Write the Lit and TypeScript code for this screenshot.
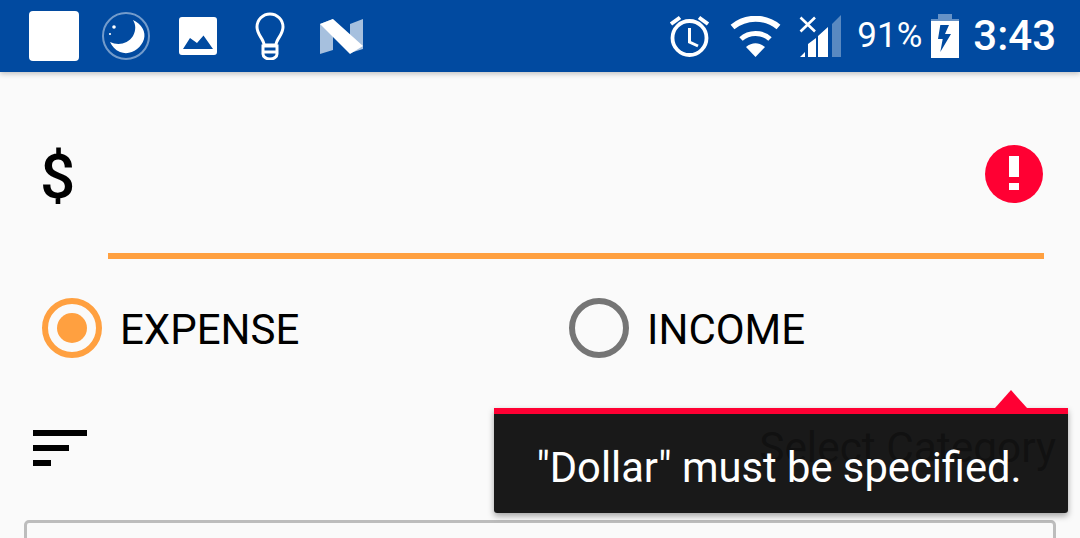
import { LitElement, html, css } from "lit";
import { customElement } from "lit/decorators.js";

@customElement("app-root")
export class AppRoot extends LitElement {
  static styles = css`
    :host { display: block; position: relative; width: 1080px; height: 538px; overflow: hidden; background: #fafafa; font-family: Roboto, sans-serif; color: #000; }
    svg { display: block; flex: none; }
    .status { height: 72px; background: #014aa0; display: flex; align-items: center; color: #fff; box-shadow: 0 2px 5px rgba(0,0,0,.22); position: relative; padding-left: 29px; box-sizing: border-box; }
    .left { display: flex; align-items: center; }
    .square { width: 50px; height: 50px; background: #fff; border-radius: 4px; margin-right: 23px; }
    .i-img { margin-left: 29px; }
    .i-bulb { margin-left: 38px; }
    .i-n { margin-left: 35px; }
    .right { margin-left: auto; display: flex; align-items: center; padding-right: 24px; }
    .i-wifi { margin-left: 19px; }
    .i-sig { margin-left: 18px; }
    .pct { font-size: 35px; margin-left: 16px; line-height: 72px; width: 64px; white-space: nowrap; }
    .i-bat { margin-left: 10px; }
    .time { font-size: 42px; font-weight: 500; margin-left: 14px; line-height: 72px; white-space: nowrap; }

    .amount { height: 187px; box-sizing: border-box; display: grid; grid-template-columns: 108px 1fr; padding-right: 36px; }
    .dollar { font-size: 62px; font-weight: 500; line-height: 70px; padding: 70px 0 0 40px; box-sizing: border-box; }
    .field { border-bottom: 6px solid #ffa040; display: flex; justify-content: flex-end; align-items: flex-start; padding: 73px 1px 0 0; box-sizing: border-box; }
    .radios { display: grid; grid-template-columns: 527px 1fr; padding: 39px 0 0 42px; }
    .radio { display: flex; align-items: center; gap: 18px; font-size: 42px; line-height: 56px; }
    .label { padding-top: 4px; }
    .dot { width: 60px; height: 60px; box-sizing: border-box; border-radius: 50%; border: 6px solid #757575; display: flex; align-items: center; justify-content: center; flex: none; }
    .dot.on { border-color: #ffa040; }
    .dot.on::after { content: ""; width: 30px; height: 30px; border-radius: 50%; background: #ffa040; }
    .cat { display: flex; align-items: center; justify-content: space-between; padding: 72px 24px 0 33px; height: 36px; }
    .bars { display: flex; flex-direction: column; gap: 9px; }
    .bars i { display: block; height: 6px; background: #000; }
    .b1 { width: 54px; } .b2 { width: 36px; } .b3 { width: 18px; }
    .select { font-size: 42.4px; line-height: 50px; color: #000; white-space: nowrap; }
    .box { margin: 54px 24px 0; height: 60px; border: 3px solid #bdbdbd; border-radius: 5px; box-sizing: border-box; background: #fafafa; }

    .tip { position: absolute; left: 494px; top: 408px; width: 574px; height: 105px; box-sizing: border-box; border-top: 6px solid #ff0033; background: rgba(18,18,18,.97); border-radius: 0 0 3px 3px; box-shadow: 0 3px 6px rgba(0,0,0,.35); color: #fff; font-size: 41.7px; display: flex; align-items: center; justify-content: center; white-space: nowrap; padding: 7px 4px 0 0; }
    .tip::before { content: ""; position: absolute; right: 41px; top: -24px; width: 32px; height: 18px; background: #ff0033; clip-path: polygon(50% 0, 100% 100%, 0 100%); }
  `;

  private moon() {
    return html`<svg width="48" height="48" viewBox="0 0 48 48">
      <circle cx="24" cy="24" r="23" fill="none" stroke="#fff" stroke-opacity=".45" stroke-width="2"/>
      <path d="M31 8C40 12 44 20 42 27C39 37 28 44 18 40C13 38 10 34 8 30C16 34 26 32 31 24C34 18 34 13 31 8Z" fill="#fff"/>
      <circle cx="12" cy="15" r="1.8" fill="#fff"/><circle cx="8" cy="22" r="1.1" fill="#fff"/>
    </svg>`;
  }
  private image() {
    return html`<svg class="i-img" width="38" height="38" viewBox="0 0 38 38">
      <path fill-rule="evenodd" fill="#fff" d="M3 0H35A3 3 0 0 1 38 3V35A3 3 0 0 1 35 38H3A3 3 0 0 1 0 35V3A3 3 0 0 1 3 0ZM4 32H34L24.500 18.500L18 26L11 21Z"/>
    </svg>`;
  }
  private bulb() {
    return html`<svg class="i-bulb" width="30" height="48" viewBox="0 0 30 48" fill="none" stroke="#fff" stroke-width="3">
      <path d="M9 33C9 27 2 23 2 15A13 13 0 0 1 28 15C28 23 21 27 21 33Z"/>
      <path d="M8 34H22V42A7 5 0 0 1 8 42Z"/><path d="M8 40H22"/>
    </svg>`;
  }
  private n() {
    return html`<svg class="i-n" width="43" height="35" viewBox="0 0 43 35">
      <path d="M0 5L13 0V31L0 35Z" fill="#fff" fill-opacity=".65"/>
      <path d="M30 5L43 0V30L30 34Z" fill="#fff" fill-opacity=".65"/>
      <path d="M0 5L13 0L43 27L30 35Z" fill="#fff"/>
    </svg>`;
  }
  private alarm() {
    return html`<svg width="42" height="42" viewBox="0 0 42 42" fill="none" stroke="#fff">
      <circle cx="20.500" cy="23" r="17" stroke-width="3.800"/>
      <path d="M20.500 13V27L29 31" stroke-width="3"/>
      <path d="M2 9L11 2.500M39 9L30 2.500" stroke-width="4"/>
    </svg>`;
  }
  private wifi() {
    return html`<svg class="i-wifi" width="51" height="41" viewBox="0 0 51 41">
      <path fill="#fff" d="M25.500 41L16 31C22 26 29 26 35 31Z"/>
      <path fill="none" stroke="#fff" stroke-width="5" d="M11 23C19 15.500 32 15.500 40 23"/>
      <path fill="none" stroke="#fff" stroke-width="6" d="M2.500 11C16 0 35 0 48.500 11"/>
    </svg>`;
  }
  private signal() {
    return html`<svg class="i-sig" width="42" height="42" viewBox="0 0 42 42">
      <path d="M1 42L6 37V42Z M9 42V29L17 23V42Z M19 42V21L29 12V42Z" fill="#fff"/>
      <path d="M33 42V9L42 0V42Z" fill="#fff" fill-opacity=".35"/>
      <path d="M1.500 2.500L16 16.500M16 2.500L1.500 16.500" stroke="#fff" stroke-width="2.600"/>
    </svg>`;
  }
  private battery() {
    return html`<svg class="i-bat" width="28" height="44" viewBox="0 0 28 44">
      <path d="M7 0H21V5H28V8H0V5H7Z" fill="#fff" fill-opacity=".4"/>
      <path fill-rule="evenodd" fill="#fff" d="M0 7H28V44H0ZM9.300 11L7 25H11.700L9.300 38L20 20H14L18 11Z"/>
    </svg>`;
  }

  render() {
    return html`
      <div class="status">
        <div class="left">
          <div class="square"></div>
          ${this.moon()}${this.image()}${this.bulb()}${this.n()}
        </div>
        <div class="right">
          ${this.alarm()}${this.wifi()}${this.signal()}
          <span class="pct">91%</span>
          ${this.battery()}
          <span class="time">3:43</span>
        </div>
      </div>
      <div class="amount">
        <div class="dollar">$</div>
        <div class="field">
          <svg width="58" height="58" viewBox="0 0 58 58">
            <circle cx="29" cy="29" r="29" fill="#ff0033"/>
            <path d="M24 11H34V32H24ZM24 38H34V45H24Z" fill="#fff"/>
          </svg>
        </div>
      </div>
      <div class="radios">
        <div class="radio"><span class="dot on"></span><span class="label">EXPENSE</span></div>
        <div class="radio"><span class="dot"></span><span class="label">INCOME</span></div>
      </div>
      <div class="cat">
        <div class="bars"><i class="b1"></i><i class="b2"></i><i class="b3"></i></div>
        <div class="select">Select Category</div>
      </div>
      <div class="box"></div>
      <div class="tip">"Dollar" must be specified.</div>
    `;
  }
}
